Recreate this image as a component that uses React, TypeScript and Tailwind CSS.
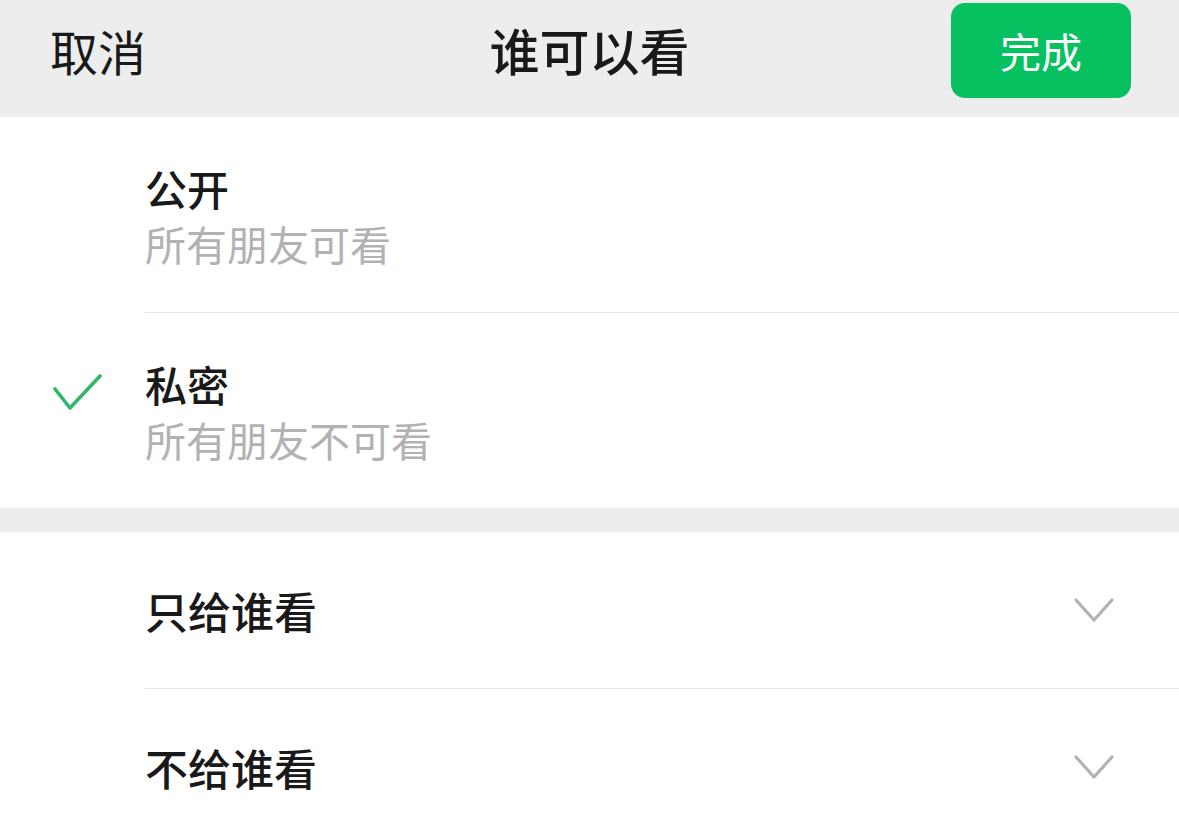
const font = { fontFamily: '"Noto Sans CJK SC", "Noto Sans", sans-serif' };

function CheckMark() {
  return (
    <svg width="50" height="38" viewBox="0 0 50 38" fill="none" className="text-[#2fb86a]">
      <polyline points="3,16 18,35 48,3" stroke="currentColor" strokeWidth="3.6" strokeLinecap="round" strokeLinejoin="round" />
    </svg>
  );
}

function Chevron() {
  return (
    <svg width="42" height="28" viewBox="0 0 42 28" fill="none" className="text-[#b2b2b2]">
      <polyline points="3,4 21,24 39,4" stroke="currentColor" strokeWidth="3.2" strokeLinecap="round" strokeLinejoin="round" />
    </svg>
  );
}

function Option({ title, desc, checked }: { title: string; desc: string; checked?: boolean }) {
  return (
    <div className="flex h-[195px] items-center">
      <div className="flex w-[145px] shrink-0 pl-[52px] pb-[38px]">{checked && <CheckMark />}</div>
      <div className="flex flex-col">
        <span className="text-[42px] leading-[56px] font-medium text-[#191919]">{title}</span>
        <span className="text-[41px] leading-[54px] text-[#b2b2b2]">{desc}</span>
      </div>
    </div>
  );
}

function Expand({ title }: { title: string }) {
  return (
    <div className="flex h-[156px] items-center pl-[145px] pr-[64px]">
      <span className="flex-1 text-[43px] font-medium text-[#191919]">{title}</span>
      <Chevron />
    </div>
  );
}

export default function App() {
  return (
    <div className="h-[835px] w-[1179px] overflow-hidden bg-white" style={font}>
      {/* 顶部栏 */}
      <div className="relative flex h-[117px] items-center justify-between bg-[#ededed] pl-[50px] pr-[48px]">
        <span className="pb-[18px] text-[48px] text-[#191919]">取消</span>
        <span className="absolute left-1/2 top-[12px] -translate-x-1/2 text-[50px] font-medium text-[#191919]">谁可以看</span>
        <button className="mb-[16px] flex h-[95px] w-[180px] items-center justify-center rounded-[14px] bg-[#07c160] text-[41px] text-white">
          完成
        </button>
      </div>

      <Option title="公开" desc="所有朋友可看" />
      <div className="ml-[145px] h-px bg-[#e5e5e5]" />
      <Option title="私密" desc="所有朋友不可看" checked />

      <div className="h-[24px] bg-[#ededed]" />

      <Expand title="只给谁看" />
      <div className="ml-[145px] h-px bg-[#e5e5e5]" />
      <Expand title="不给谁看" />
    </div>
  );
}
